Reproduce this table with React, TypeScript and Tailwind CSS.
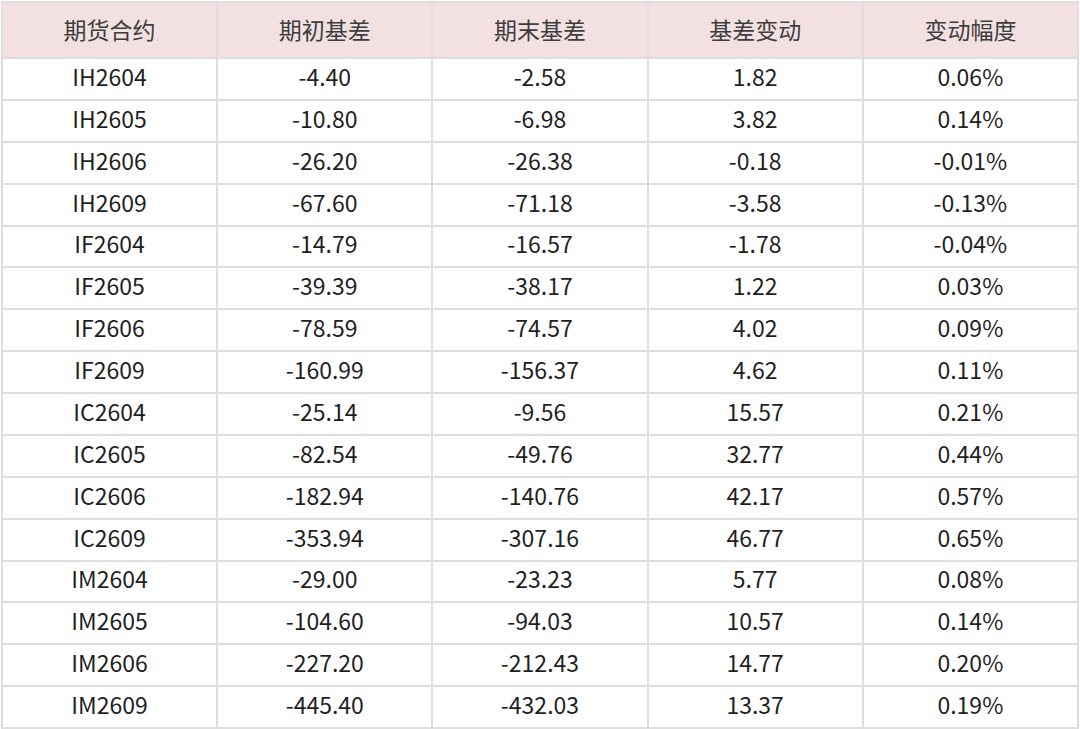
const headers = ["期货合约", "期初基差", "期末基差", "基差变动", "变动幅度"];

const rows: string[][] = [
  ["IH2604", "-4.40", "-2.58", "1.82", "0.06%"],
  ["IH2605", "-10.80", "-6.98", "3.82", "0.14%"],
  ["IH2606", "-26.20", "-26.38", "-0.18", "-0.01%"],
  ["IH2609", "-67.60", "-71.18", "-3.58", "-0.13%"],
  ["IF2604", "-14.79", "-16.57", "-1.78", "-0.04%"],
  ["IF2605", "-39.39", "-38.17", "1.22", "0.03%"],
  ["IF2606", "-78.59", "-74.57", "4.02", "0.09%"],
  ["IF2609", "-160.99", "-156.37", "4.62", "0.11%"],
  ["IC2604", "-25.14", "-9.56", "15.57", "0.21%"],
  ["IC2605", "-82.54", "-49.76", "32.77", "0.44%"],
  ["IC2606", "-182.94", "-140.76", "42.17", "0.57%"],
  ["IC2609", "-353.94", "-307.16", "46.77", "0.65%"],
  ["IM2604", "-29.00", "-23.23", "5.77", "0.08%"],
  ["IM2605", "-104.60", "-94.03", "10.57", "0.14%"],
  ["IM2606", "-227.20", "-212.43", "14.77", "0.20%"],
  ["IM2609", "-445.40", "-432.03", "13.37", "0.19%"],
];

export default function App() {
  return (
    <div
      className="w-[1080px] h-[729px] bg-white p-[1px] overflow-hidden"
      style={{ fontFamily: '"Noto Sans CJK SC", "Noto Sans", sans-serif' }}
    >
      <table className="w-[1078px] table-fixed border-collapse text-[23px] leading-none">
        <thead>
          <tr className="h-[56px] bg-[#f3e1e2]">
            {headers.map((h) => (
              <th
                key={h}
                className="border-2 border-[#dedede] font-normal text-[#3d3d3d] text-center align-middle px-0 pt-0 pb-[1px]"
              >
                {h}
              </th>
            ))}
          </tr>
        </thead>
        <tbody>
          {rows.map((r) => (
            <tr key={r[0]} className="h-[41.875px]">
              {r.map((c, i) => (
                <td
                  key={i}
                  className="border-2 border-[#dedede] text-center align-middle text-[#1f1f1f] px-0 pt-0 pb-[5px]"
                >
                  {c}
                </td>
              ))}
            </tr>
          ))}
        </tbody>
      </table>
    </div>
  );
}
